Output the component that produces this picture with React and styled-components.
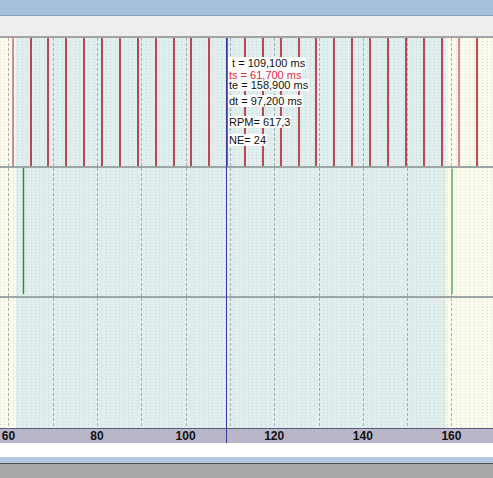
import React from 'react';
import styled, { createGlobalStyle } from 'styled-components';

const W = 493;
const X0 = 97;
const PX = 4.43;
const xOf = (v) => X0 + (v - 80) * PX;
const TS_X = 16;
const TE_X = 446;

const GlobalStyle = createGlobalStyle`
  html, body { margin: 0; padding: 0; width: 493px; height: 478px; overflow: hidden; background: #fff; }
  body { font-family: "Liberation Sans", Arial, sans-serif; }
`;

const Frame = styled.div`
  display: flex;
  flex-direction: column;
  width: 493px;
  height: 478px;
`;

const TitleBar = styled.div`
  flex: none;
  height: 15px;
  background: #a7c0dd;
  border-bottom: 1px solid #8aa0bb;
`;

const Toolbar = styled.div`
  flex: none;
  height: 20px;
  background: #eeeeee;
  border-bottom: 2px solid #a4a4a4;
`;

const Plot = styled.div`
  position: relative;
  flex: none;
  display: flex;
  flex-direction: column;
`;

const Panel = styled.div`
  flex: none;
  height: ${(p) => p.$h}px;
  border-bottom: ${(p) => (p.$sep ? '2px solid #9ea5a5' : 'none')};
  svg { display: block; }
`;

const Axis = styled.div`
  position: relative;
  flex: none;
  height: 14px;
  background: #b9b6c9;
  border-top: 1px solid #5e5c7c;
`;

const AxisLabel = styled.span`
  position: absolute;
  top: 0;
  transform: translateX(-50%);
  font: bold 12px/14px "Liberation Sans", Arial, sans-serif;
  color: #111;
`;

const Cursor = styled.div`
  position: absolute;
  left: 226px;
  top: 0;
  bottom: 0;
  width: 1px;
  background: #3b3b9e;
`;

const Readout = styled.div`
  position: absolute;
  left: 228px;
  top: 19px;
  display: flex;
  flex-direction: column;
  align-items: flex-start;
`;

const ReadoutRow = styled.div`
  position: relative;
  z-index: ${(p) => (p.$red ? 2 : 1)};
  margin-top: ${(p) => p.$mt}px;
  padding: 0 1px;
  height: 12px;
  background: #fff;
  color: ${(p) => (p.$red ? '#e2283c' : '#111')};
  font-family: "Liberation Sans", Arial, sans-serif;
  font-size: 11px;
  line-height: 12px;
  white-space: pre;
`;

const WhiteStrip = styled.div`
  flex: none;
  height: 14px;
  background: #fff;
`;

const BlueStrip = styled.div`
  flex: none;
  height: 6px;
  background: #b3c9e1;
  border-bottom: 1px solid #4e4e4e;
`;

const StatusBar = styled.div`
  flex: none;
  height: 14px;
  background: #a9a9a9;
`;

function Grid({ h, children }) {
  const lines = [];
  for (let v = 58; v <= 170; v++) {
    const x = Math.round(xOf(v)) + 0.5;
    if (x < 0 || x > W) continue;
    const inside = x >= TS_X && x <= TE_X;
    const major = v % 10 === 0;
    const stroke = major
      ? (inside ? '#a2acb8' : '#b2b2a2')
      : (inside ? '#c9d6d8' : '#dadac6');
    lines.push(
      <line
        key={v}
        x1={x}
        x2={x}
        y1={0}
        y2={h}
        stroke={stroke}
        strokeWidth={1}
        strokeDasharray={major ? '3 2' : '1 2'}
      />
    );
  }
  return (
    <svg width={W} height={h}>
      <rect width={W} height={h} fill="#fbfbee" />
      <rect x={TS_X} width={TE_X - TS_X} height={h} fill="#e0eeee" />
      {lines}
      {children}
    </svg>
  );
}

function EventMarks({ h }) {
  const marks = [];
  for (let k = 0; k <= 26; k++) {
    const x = Math.round(12.7 + k * 17.87);
    const light = k === 0 || k === 25;
    marks.push(
      <line
        key={k}
        x1={x}
        x2={x}
        y1={0}
        y2={h}
        stroke={light ? '#d68a90' : '#b41e2e'}
        strokeWidth={light ? 2 : 1.6}
      />
    );
  }
  return <>{marks}</>;
}

const rows = [
  { text: ' t = 109,100 ms', mt: 0 },
  { text: 'ts = 61,700 ms', mt: 0, red: true },
  { text: 'te = 158,900 ms', mt: -2 },
  { text: 'dt = 97,200 ms', mt: 4 },
  { text: 'RPM= 617,3', mt: 9 },
  { text: 'NE= 24', mt: 6 },
];

const ticks = [60, 80, 100, 120, 140, 160];

export default function App() {
  return (
    <>
      <GlobalStyle />
      <Frame>
        <TitleBar />
        <Toolbar />
        <Plot>
          <Panel $h={128} $sep>
            <Grid h={128}>
              <EventMarks h={128} />
            </Grid>
          </Panel>
          <Panel $h={128} $sep>
            <Grid h={128}>
              <line x1={23.5} x2={23.5} y1={0} y2={126} stroke="#1a962a" strokeWidth={1.4} />
              <line x1={452} x2={452} y1={1} y2={126} stroke="#7cc47e" strokeWidth={2} />
            </Grid>
          </Panel>
          <Panel $h={130}>
            <Grid h={130} />
          </Panel>
          <Axis>
            {ticks.map((v) => (
              <AxisLabel key={v} style={{ left: `${xOf(v)}px` }}>{v}</AxisLabel>
            ))}
          </Axis>
          <Cursor />
          <Readout>
            {rows.map((r) => (
              <ReadoutRow key={r.text} $mt={r.mt} $red={r.red}>{r.text}</ReadoutRow>
            ))}
          </Readout>
        </Plot>
        <WhiteStrip />
        <BlueStrip />
        <StatusBar />
      </Frame>
    </>
  );
}
